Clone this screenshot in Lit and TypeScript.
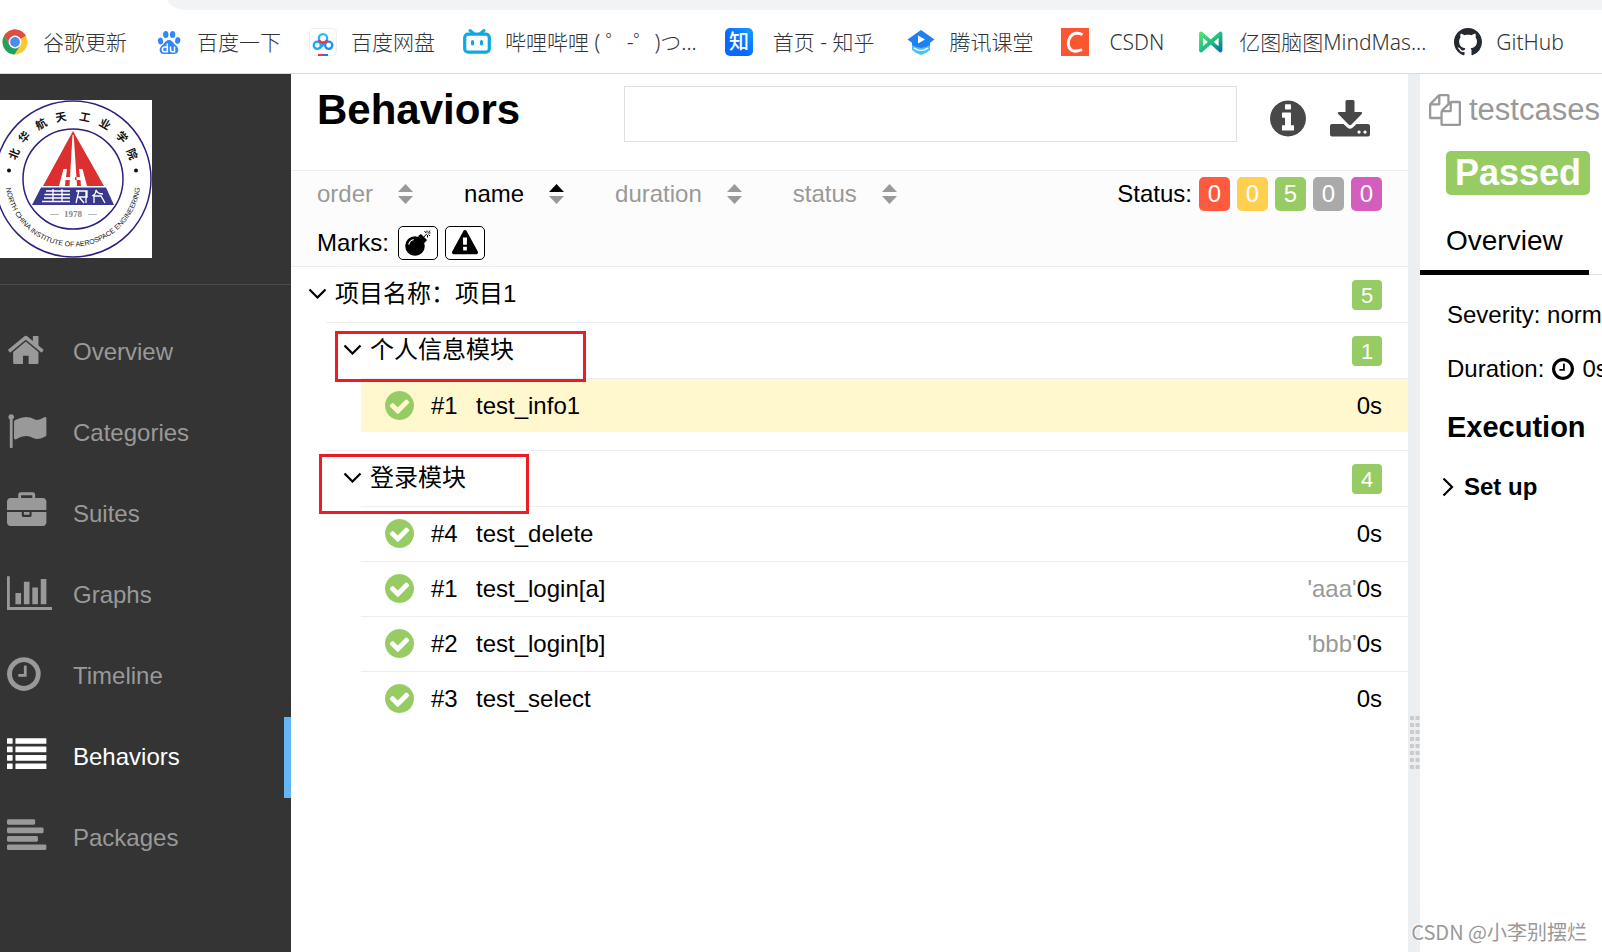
import { LitElement, html, svg, css, nothing } from "lit";
import { customElement, state } from "lit/decorators.js";
import { classMap } from "lit/directives/class-map.js";

const DISC =
  "M1664 896q0 209-103 385.5t-279.5 279.5-385.5 103-385.5-103-279.5-279.5-103-385.5 103-385.5 279.5-279.5 385.5-103 385.5 103 279.5 279.5 103 385.5z";

const clockPath =
  "M1024 544v448q0 14-9 23t-23 9h-320q-14 0-23-9t-9-23v-64q0-14 9-23t23-9h224v-352q0-14 9-23t23-9h64q14 0 23 9t9 23zm416 352q0-148-73-273t-198-198-273-73-273 73-198 198-73 273 73 273 198 198 273 73 273-73 198-198 73-273zM1664 896q0 209-103 385.5t-279.5 279.5-385.5 103-385.5-103-279.5-279.5-103-385.5 103-385.5 279.5-279.5 385.5-103 385.5 103 279.5 279.5 103 385.5z";

const navIcons: Record<string, unknown> = {
  Overview: svg`<path d="M1472 992v480q0 26-19 45t-45 19h-384v-384h-256v384h-384q-26 0-45-19t-19-45v-480q0-1 .5-3t.5-3l575-474 575 474q1 2 1 6zm223-69l-62 74q-8 9-21 11h-3q-13 0-21-7l-692-577-692 577q-12 8-24 7-13-2-21-11l-62-74q-8-10-7-23.500t11-21.500l719-599q32-26 76-26t76 26l244 204v-195q0-14 9-23t23-9h192q14 0 23 9t9 23v408l219 182q10 8 11 21.500t-7 23.500z" transform="translate(-40 0)"/>`,
  Categories: svg`<path d="M320 256q0 72-64 110v1266q0 13-9.500 22.500t-22.500 9.500h-64q-13 0-22.500-9.500t-9.500-22.500v-1266q-64-38-64-110 0-53 37.500-90.500t90.500-37.500 90.500 37.500 37.500 90.500zm1472 64v763q0 25-12.500 38.500t-39.500 27.500q-215 116-369 116-61 0-123.500-22t-108.500-48-115.500-48-142.500-22q-192 0-464 146-17 9-33 9-26 0-45-19t-19-45v-742q0-32 31-55 21-14 79-43 236-120 421-120 107 0 200 29t219 88q38 19 88 19 54 0 117.500-21t110-47 88-47 54.500-21q26 0 45 19t19 45z"/>`,
  Suites: svg`<path d="M640 256h512v-128h-512v128zm1152 640v480q0 66-47 113t-113 47h-1472q-66 0-113-47t-47-113v-480h672v160q0 26 19 45t45 19h320q26 0 45-19t19-45v-160h672zm-768 0v128h-256v-128h256zm768-480v384h-1792v-384q0-66 47-113t113-47h352v-160q0-40 28-68t68-28h576q40 0 68 28t28 68v160h352q66 0 113 47t47 113z"/>`,
  Graphs: svg`<path d="M640 896v512h-256v-512h256zm384-512v1024h-256v-1024h256zm1024 1152v128h-2048v-1536h128v1408h1920zm-640-896v768h-256v-768h256zm384-384v1152h-256v-1152h256z"/>`,
  Timeline: svg`<path transform="translate(-128 0)" fill-rule="evenodd" d=${clockPath} />`,
  Behaviors: svg`${[128, 512, 896, 1280].map(
    (y) => svg`<rect x="0" y=${y} width="256" height="256" rx="24"/><rect x="384" y=${y} width="1408" height="256" rx="24"/>`
  )}`,
  Packages: svg`${[
    [128, 1280],
    [512, 1664],
    [896, 1408],
    [1280, 1792],
  ].map(([y, w]) => svg`<rect x="0" y=${y} width=${w} height="256" rx="64"/>`)}`,
};

interface Bookmark {
  label: string;
  icon: unknown;
  wide?: boolean;
}

const bookmarks: Bookmark[] = [
  {
    label: "谷歌更新",
    icon: svg`<circle cx="14" cy="14" r="12.500" fill="#fbc934"/>
      <path d="M14 14 3.200 7.700A12.500 12.500 0 0 1 24.800 7.700z" fill="#dd4f43"/>
      <path d="M14 7.500h10.700A12.500 12.500 0 0 0 3.200 7.700L8.400 17z" fill="#dd4f43"/>
      <path d="M3.200 7.700A12.500 12.500 0 0 0 13.500 26.500L19 17.500 14 14 8.500 17z" fill="#1fa15d"/>
      <circle cx="14" cy="14" r="6.400" fill="#fff"/><circle cx="14" cy="14" r="4.900" fill="#4c8bf5"/>`,
  },
  {
    label: "百度一下",
    icon: svg`<g fill="#3388f8"><ellipse cx="5.500" cy="13" rx="2.600" ry="3.400" transform="rotate(-10 5.500 13)"/>
      <ellipse cx="10.800" cy="6.500" rx="2.700" ry="3.600"/><ellipse cx="17.600" cy="6.500" rx="2.700" ry="3.600"/>
      <ellipse cx="22.700" cy="12.500" rx="2.600" ry="3.400" transform="rotate(10 22.700 12.500)"/>
      <path d="M14 12c3 0 4 2.500 6 4.500 2.500 2.200 4 4 3 7-1 3-4 2.600-9 2.600s-8 .4-9-2.600c-1-3 .5-4.800 3-7 2-2 3-4.500 6-4.500z"/></g>
      <path d="M12.300 15.500v8.300H9.800a2.300 2.300 0 0 1 0-4.800h2.500M15.500 18.500v3.800q0 1.500 1.500 1.500h2.500v-5.300" fill="none" stroke="#fff" stroke-width="1.500"/>`,
  },
  {
    label: "百度网盘",
    icon: svg`<rect x=".5" y=".5" width="27" height="27" rx="4" fill="#fff" stroke="#eee"/>
      <g fill="none" stroke-width="2.300"><circle cx="8.300" cy="17.300" r="3.600" stroke="#18a8f8"/><circle cx="19.700" cy="17.300" r="3.600" stroke="#1890f8"/>
      <path d="M11 20 17 14.200" stroke="#18a8f8"/><circle cx="14" cy="10.300" r="4.200" stroke="#20b8ff"/>
      <path d="M10 12a4.200 4.200 0 0 0 8 0" stroke="#f0304c"/></g>
      <path d="M9 26h5v2H9z" fill="#f0304c"/><path d="M14 26h5v2h-5z" fill="#1878f8"/>`,
  },
  {
    label: "哔哩哔哩 ( ゜-゜)つ...",
    icon: svg`<g fill="none" stroke="#10a8e0" stroke-linecap="round"><rect x="1.700" y="6.200" width="24.600" height="18" rx="3.500" stroke-width="3.200"/>
      <path d="m7 2.500 3.500 3M21 2.500 17.500 5.500" stroke-width="3"/><path d="M9.500 13.500v2.500M18.500 13.500v2.500" stroke-width="3"/></g>`,
  },
  {
    label: "首页 - 知乎",
    wide: true,
    icon: svg`<defs><linearGradient id="zh" x1="0" y1="1" x2="1" y2="0"><stop offset=".4" stop-color="#0868ff"/><stop offset="1" stop-color="#10a0ff"/></linearGradient></defs>
      <rect width="28" height="28" rx="5" fill="url(#zh)"/><text class="zhihu" x="14" y="21" text-anchor="middle">知</text>`,
  },
  {
    label: "腾讯课堂",
    icon: svg`<path d="m14 2 13.500 9.500L23 14.800V20l-9 4-9-4v-5.200L.5 11.500z" fill="#2080f0"/>
      <path d="M5 17q9 6 18 0v5q-4 4-9 5-5-1-9-5z" fill="#50c0f8"/><path d="M7 20q7 5 14 0" fill="none" stroke="#fff" stroke-width="1.200"/>
      <path d="M11 7.500v8l7-4z" fill="#fff"/>`,
  },
  {
    label: "CSDN",
    wide: true,
    icon: svg`<path d="M0 0h28v28H0z" fill="#fc5531"/><path d="M21.500 6.800C17 4 12 5 9.300 8.800 6 14 6.500 20 11 22.300c3 1.300 6.500 1 10-.8" fill="none" stroke="#fff" stroke-width="3"/>`,
  },
  {
    label: "亿图脑图MindMas...",
    icon: svg`<defs><linearGradient id="mm" x1="0" y1="0" x2="1" y2="1"><stop offset="0" stop-color="#50e070"/><stop offset=".5" stop-color="#20c080"/><stop offset="1" stop-color="#0878a0"/></linearGradient></defs>
      <path d="M4 22.500V5.500L23.500 22.500V5.500z" fill="none" stroke="url(#mm)" stroke-width="3.800" stroke-linejoin="round"/>`,
  },
  {
    label: "GitHub",
    icon: svg`<path transform="scale(1.750)" fill="#24292f" d="M8 0C3.580 0 0 3.580 0 8c0 3.540 2.290 6.530 5.470 7.590.4.070.55-.17.55-.38 0-.19-.01-.82-.01-1.490-2.010.37-2.530-.49-2.690-.94-.09-.23-.48-.94-.82-1.130-.28-.15-.68-.52-.01-.53.63-.01 1.080.58 1.230.82.72 1.210 1.870.87 2.330.66.07-.52.28-.87.51-1.070-1.780-.2-3.640-.89-3.640-3.950 0-.87.31-1.590.82-2.150-.08-.2-.36-1.020.08-2.120 0 0 .67-.21 2.200.82.64-.18 1.320-.27 2-.27s1.360.09 2 .27c1.530-1.040 2.200-.82 2.200-.82.44 1.100.16 1.920.08 2.120.51.56.82 1.270.82 2.150 0 3.070-1.870 3.750-3.650 3.950.29.25.54.73.54 1.480 0 1.070-.01 1.930-.01 2.200 0 .21.15.46.55.38A8.010 8.010 0 0 0 16 8c0-4.420-3.580-8-8-8z"/>`,
  },
];

interface Leaf {
  order: number;
  name: string;
  param?: string;
}

interface Group {
  title: string;
  mark: string;
  leaves: Leaf[];
}

const groups: Group[] = [
  { title: "个人信息模块", mark: "mark-info", leaves: [{ order: 1, name: "test_info1" }] },
  {
    title: "登录模块",
    mark: "mark-login",
    leaves: [
      { order: 4, name: "test_delete" },
      { order: 1, name: "test_login[a]", param: "'aaa'" },
      { order: 2, name: "test_login[b]", param: "'bbb'" },
      { order: 3, name: "test_select" },
    ],
  },
];

const statuses: [string, number][] = [
  ["failed", 0],
  ["broken", 0],
  ["passed", 5],
  ["skipped", 0],
  ["unknown", 0],
];

const crest: [string, number, number, number][] = [
  ["北", 14, 54, -68],
  ["华", 24, 37, -49],
  ["航", 41, 24, -30],
  ["天", 61, 17, -11],
  ["工", 85, 17, 11],
  ["业", 105, 24, 30],
  ["学", 122, 37, 49],
  ["院", 132, 54, 68],
];

const chevronDown = html`<svg class="chevron" viewBox="0 0 19 11" aria-hidden="true">
  <path d="m1.500 1.500 8 8 8-8" fill="none" stroke="currentColor" stroke-width="2.200" />
</svg>`;

@customElement("app-root")
export class AppRoot extends LitElement {
  @state() private sortKey = "name";
  @state() private page = "Behaviors";
  @state() private selected = "test_info1";

  static styles = css`
    :host {
      display: flex;
      flex-direction: column;
      position: relative;
      min-height: 100vh;
      overflow: hidden;
      background: #fff;
      color: #000;
      font: 24px/32px "Liberation Sans", "Noto Sans CJK SC", Arial, sans-serif;
    }
    * { box-sizing: border-box; }
    button {
      font: inherit;
      color: inherit;
      background: none;
      border: 0;
      padding: 0;
      margin: 0;
      cursor: pointer;
    }
    a { color: inherit; text-decoration: none; }
    svg { display: block; flex: none; }
    ul { list-style: none; margin: 0; padding: 0; }
    h1, h2, h3, p { margin: 0; }

    .strip {
      height: 10px;
      margin-left: 168px;
      background: #f1f3f4;
      border-bottom-left-radius: 20px 10px;
    }
    .bookmarks {
      display: flex;
      gap: 28px;
      height: 64px;
      padding-left: 1px;
      align-items: center;
      border-bottom: 1px solid #d8dadc;
      color: #303438;
      font: 300 21px/28px "Noto Sans", "Noto Sans CJK SC", sans-serif;
      white-space: pre;
    }
    .bookmark { display: flex; gap: 14px; align-items: center; flex: none; }
    .bookmark.wide { gap: 20px; padding-right: 5px; }
    .bookmark svg { width: 28px; height: 28px; }
    .zhihu { font: 500 20px "Noto Sans CJK SC", sans-serif; fill: #fff; }

    .layout {
      flex: 1;
      display: grid;
      grid-template-columns: 291px minmax(0, 1fr) 12px 182px;
    }

    .sidebar { background: #343434; color: #999; }
    .brand { padding: 26px 0; border-bottom: 1px solid #4c4c4c; }
    .brand svg { width: 152px; height: 158px; background: #fff; }
    .crest-char { font: 700 11px "Noto Sans CJK SC", sans-serif; }
    .crest-ring { font: 7px "Liberation Sans", sans-serif; }
    .crest-year { font: 700 9px "Liberation Serif", serif; fill: #888; }
    .nav { padding-top: 27px; }
    .nav a {
      display: flex;
      align-items: center;
      gap: 21px;
      height: 81px;
      padding: 0 0 2px 7px;
      border-right: 7px solid transparent;
    }
    .nav a.active { color: #fff; border-right-color: #64b5f6; }
    .nav svg { width: 45px; height: 40px; margin-bottom: 4px; fill: currentColor; }

    .header {
      display: flex;
      align-items: flex-start;
      height: 97px;
      padding: 12px 38px 0 26px;
      border-bottom: 1px solid #eceff1;
    }
    .header h1 { font-size: 42px; line-height: 48px; flex: 0 0 307px; }
    .search {
      flex: 1;
      min-width: 0;
      height: 56px;
      padding: 0 14px;
      font: inherit;
      border: 1px solid #e0e0e0;
      outline: none;
      background: #fff;
    }
    .tools { display: flex; gap: 24px; padding: 14px 0 0 33px; color: #484848; }
    .tools svg { height: 37px; fill: currentColor; }

    .filters {
      display: flex;
      flex-direction: column;
      gap: 15px;
      padding: 6px 26px;
      background: #fcfcfc;
      border-bottom: 1px solid #eceff1;
    }
    .filter-row { display: flex; align-items: center; height: 34px; }
    .sorts { display: flex; gap: 51px; flex: 1; }
    .sort { display: flex; align-items: center; gap: 25px; color: #999; }
    .sort.active { color: #000; }
    .sort svg { width: 15px; height: 20px; }
    .statuses, .marks { display: flex; align-items: center; gap: 7px; }
    .marks span { padding-right: 2px; }
    .status {
      width: 31px;
      height: 34px;
      border-radius: 5px;
      color: #fff;
      text-align: center;
    }
    .failed { background: #fd5a3e; }
    .broken { background: #ffd050; }
    .passed { background: #97cc64; }
    .skipped { background: #aaa; }
    .unknown { background: #d35ebe; }
    .mark {
      display: grid;
      place-items: center;
      width: 40px;
      height: 34px;
      border: 1px solid #000;
      border-radius: 5px;
      background: #fff;
    }
    .mark svg { width: 26px; height: 26px; }

    .node {
      display: flex;
      align-items: center;
      gap: 8px;
      width: 100%;
      height: 55px;
      padding: 0 26px 0 17px;
      text-align: left;
    }
    .node .title { flex: 1; padding-bottom: 2px; }
    .chevron { width: 19px; height: 11px; margin-bottom: 2px; }
    .count {
      width: 30px;
      height: 30px;
      border-radius: 4px;
      background: #97cc64;
      color: #fff;
      font-size: 22px;
      line-height: 31px;
      text-align: center;
    }
    .children { margin-left: 35px; }
    .children .children { padding-bottom: 18px; }
    .children > li { position: relative; border-top: 1px solid #eceff1; }
    .children .children > li:not(:last-child) { padding-bottom: 1px; }
    .leaf {
      display: flex;
      align-items: center;
      height: 53px;
      padding: 0 26px 0 24px;
    }
    .leaf.selected { background: #fff8cf; }
    .leaf svg { width: 29px; height: 29px; margin-right: 17px; fill: #97cc64; }
    .leaf .order { width: 45px; }
    .leaf .name { flex: 1; }
    .leaf .param { color: #999; }
    .callout { position: absolute; z-index: 1; border: 3px solid #ed1c24; pointer-events: none; }
    .mark-info { left: 9px; top: 8px; width: 251px; height: 51px; }
    .mark-login { left: -7px; top: 3px; width: 210px; height: 60px; }

    .gutter { background: #eceff1; padding: 642px 0 0 2px; }
    .gutter svg { width: 10px; height: 54px; fill: #ccc; }

    .detail { overflow: hidden; white-space: nowrap; }
    .path {
      display: flex;
      align-items: center;
      gap: 8px;
      height: 72px;
      padding-left: 9px;
      color: #999;
      font-size: 31px;
    }
    .path svg { width: 32px; height: 32px; fill: currentColor; }
    .verdict {
      display: block;
      width: 144px;
      margin: 5px 0 0 26px;
      border-radius: 5px;
      color: #fff;
      font-size: 36px;
      font-weight: 700;
      line-height: 44px;
      text-align: center;
    }
    .tabs { display: flex; margin-top: 22px; border-bottom: 1px solid #e0e0e0; }
    .tab {
      margin-bottom: -1px;
      padding: 8px 26px 13px;
      border-bottom: 5px solid #000;
      font-size: 28px;
    }
    .facts { padding: 24px 0 0 27px; }
    .fact { display: flex; gap: 8px; align-items: center; margin-bottom: 22px; }
    .fact svg { width: 22px; height: 22px; }
    .facts h2 { font-size: 29px; padding-top: 4px; margin-bottom: 28px; }
    .setup { display: flex; align-items: center; gap: 10px; margin-left: 22px; font-weight: 700; }
    .setup svg { width: 12px; height: 20px; }

    .watermark {
      position: absolute;
      right: 15px;
      bottom: 6px;
      color: #999;
      font: 20px/28px "Noto Sans CJK SC", sans-serif;
      text-shadow: 1px 1px 0 #fff, -1px -1px 0 #fff;
    }
  `;

  private renderBookmark(b: Bookmark) {
    return html`<a class=${classMap({ bookmark: true, wide: !!b.wide })} href="#">
      <svg viewBox="0 0 28 28" aria-hidden="true">${b.icon}</svg><span>${b.label}</span></a>`;
  }

  private renderCrest() {
    return html`<svg viewBox="0 0 152 158" role="img" aria-label="North China Institute of Aerospace Engineering">
      <defs><path id="ring" d="M5.500 79a67.500 67.500 0 0 0 135 0" /></defs>
      <circle cx="73" cy="79" r="78" fill="#fff" stroke="#2f2080" stroke-width="1.500" />
      <circle cx="73" cy="79" r="50" fill="none" stroke="#2f2080" stroke-width="1.500" />
      <path d="M73 31 104 86H43z" fill="#dc3030" />
      <path d="M72.500 35h1.200L77 86h-7.500zM59 86l4.500-17h3.500l-1 8h5v3h-5.500l-.5 6zM87 86l-4.500-17H79l1 8h-5v3h5.500l.5 6z" fill="#fff" />
      <path d="M41 87.500h65l8 17.500H32z" fill="#38388c" />
      <path d="M46 91h24M44.500 94.500H70M44 98h26M42 101.500h28M53 89v13M62 89v13M79 90l-3 13M76 91h11v6H77M86 91v12M79 97l5 6M92 96c3-1 4-4 4-6 1 3 4 4 7 4M94 96v7M94 96h7l4 7" fill="none" stroke="#fff" stroke-width="1.300" />
      <g fill="#111">
        <circle cx="9" cy="70.500" r="2" /><circle cx="136" cy="70.500" r="2" />
        ${crest.map(
          ([ch, x, y, r]) => svg`<text class="crest-char" text-anchor="middle" transform="translate(${x} ${y}) rotate(${r})" y="4">${ch}</text>`
        )}
        <text class="crest-ring"><textPath href="#ring" startOffset="50%" text-anchor="middle">NORTH CHINA INSTITUTE OF AEROSPACE ENGINEERING</textPath></text>
      </g>
      <text class="crest-year" x="73" y="117" text-anchor="middle">1978</text>
      <path d="M50 114.500h9M88 114.500h9" stroke="#bbb" />
    </svg>`;
  }

  private renderSort(key: string) {
    const active = this.sortKey === key;
    return html`<button class=${classMap({ sort: true, active })} @click=${() => (this.sortKey = key)}>
      ${key}
      <svg viewBox="0 0 15 20" aria-hidden="true">
        <path d="M7.500 0 15 8H0z" fill="currentColor" /><path d="M0 12h15l-7.500 8z" fill="#999" />
      </svg>
    </button>`;
  }

  private renderLeaf(leaf: Leaf) {
    return html`<li>
      <a class=${classMap({ leaf: true, selected: leaf.name === this.selected })} href="#" @click=${() => (this.selected = leaf.name)}>
        <svg viewBox="128 128 1536 1536" aria-hidden="true">
          <path d="M1412 734q0-28-18-46l-91-90q-19-19-45-19t-45 19l-408 407-226-226q-19-19-45-19t-45 19l-91 90q-18 18-18 46 0 27 18 45l362 362q19 19 45 19 27 0 46-19l543-543q18-18 18-45z${DISC}" fill-rule="evenodd" />
        </svg>
        <span class="order">#${leaf.order}</span>
        <span class="name">${leaf.name}</span>
        ${leaf.param ? html`<span class="param">${leaf.param}</span>` : nothing}
        <span>0s</span>
      </a>
    </li>`;
  }

  private renderGroup(group: Group) {
    return html`<li>
      <button class="node">
        ${chevronDown}<span class="title">${group.title}</span><span class="count">${group.leaves.length}</span>
      </button>
      <ul class="children">${group.leaves.map((l) => this.renderLeaf(l))}</ul>
      <div class="callout ${group.mark}"></div>
    </li>`;
  }

  render() {
    return html`
      <div class="strip"></div>
      <nav class="bookmarks" aria-label="Bookmarks">${bookmarks.map((b) => this.renderBookmark(b))}</nav>
      <div class="layout">
        <aside class="sidebar">
          <div class="brand">${this.renderCrest()}</div>
          <nav class="nav">
            ${Object.keys(navIcons).map(
              (name) => html`<a href="#" class=${classMap({ active: name === this.page })} @click=${() => (this.page = name)}>
                <svg viewBox="0 0 2048 1792" aria-hidden="true">${navIcons[name]}</svg>${name}</a>`
            )}
          </nav>
        </aside>

        <main>
          <header class="header">
            <h1>Behaviors</h1>
            <input class="search" type="text" aria-label="Search" />
            <div class="tools">
              <button aria-label="Show info">
                <svg width="36" viewBox="128 128 1536 1536">
                  <path fill-rule="evenodd" d="M1152 1376v-160q0-14-9-23t-23-9h-96v-512q0-14-9-23t-23-9h-320q-14 0-23 9t-9 23v160q0 14 9 23t23 9h96v320h-96q-14 0-23 9t-9 23v160q0 14 9 23t23 9h448q14 0 23-9t9-23zm-128-896v-160q0-14-9-23t-23-9h-192q-14 0-23 9t-9 23v160q0 14 9 23t23 9h192q14 0 23-9t9-23z${DISC}" />
                </svg>
              </button>
              <button aria-label="Download CSV">
                <svg width="40" viewBox="0 0 40 37">
                  <path d="M17 0h6q1.500 0 1.500 1.500V12H31q2 .5.500 2.300l-10 10.200q-1.500 1.300-3 0l-10-10.200Q7 12.500 9 12h6.500V1.500Q15.500 0 17 0z" />
                  <path fill-rule="evenodd" d="M2 24h11.500l4.300 4q2.200 1.600 4.400 0l4.300-4H38q2 0 2 2v8.500q0 2-2 2H2q-2 0-2-2V26q0-2 2-2zm27 6.500a1.600 1.600 0 1 0 .1 0zm6 0a1.600 1.600 0 1 0 .1 0z" />
                </svg>
              </button>
            </div>
          </header>

          <section class="filters">
            <div class="filter-row">
              <div class="sorts">${["order", "name", "duration", "status"].map((k) => this.renderSort(k))}</div>
              <div class="statuses">
                <span>Status:</span>
                ${statuses.map(([cls, n]) => html`<button class="status ${cls}" aria-label=${cls}>${n}</button>`)}
              </div>
            </div>
            <div class="filter-row marks">
              <span>Marks:</span>
              <button class="mark" aria-label="Flaky">
                <svg viewBox="0 0 26 26">
                  <circle cx="10" cy="16" r="9.800" /><path d="m13 6 3-2 6 6-2.500 3z" />
                  <path d="M3.700 14.500q1-4 5-5" fill="none" stroke="#fff" stroke-width="1.200" />
                  <path d="m18 8 4-4.500M22 .5v2M19.500 1l1.500 2M25.500 3h-2M25 6l-1.500-1.500M22.500 5v2.500M25 .5l-1.500 2" fill="none" stroke="#000" />
                </svg>
              </button>
              <button class="mark" aria-label="New failed">
                <svg viewBox="0 0 1792 1792">
                  <path d="M1024 1375v-190q0-14-9.500-23.500t-22.500-9.500h-192q-13 0-22.500 9.500t-9.500 23.500v190q0 14 9.500 23.500t22.500 9.500h192q13 0 22.500-9.500t9.500-23.500zm-2-374l18-459q0-12-10-19-13-11-24-11h-220q-11 0-24 11-10 7-10 21l17 457q0 10 10 16.500t24 6.500h185q14 0 23.500-6.500t10.500-16.500zm-14-934l768 1408q35 63-2 126-17 29-46.500 46t-63.500 17h-1536q-34 0-63.500-17t-46.500-46q-37-63-2-126l768-1408q17-31 47-49t65-18 65 18 47 49z" />
                </svg>
              </button>
            </div>
          </section>

          <section>
            <button class="node">${chevronDown}<span class="title">项目名称：项目1</span><span class="count">5</span></button>
            <ul class="children">${groups.map((g) => this.renderGroup(g))}</ul>
          </section>
        </main>

        <div class="gutter">
          <svg viewBox="0 0 10 54" aria-hidden="true">
            ${[0, 7, 14, 21, 28, 35, 42, 49].map(
              (y) => svg`<rect x="0" y=${y} width="4" height="4"/><rect x="5.500" y=${y} width="4" height="4"/>`
            )}
          </svg>
        </div>

        <section class="detail">
          <div class="path">
            <svg viewBox="0 0 1792 1792" aria-hidden="true">
              <path d="M1696 384q40 0 68 28t28 68v1216q0 40-28 68t-68 28h-960q-40 0-68-28t-28-68v-288h-544q-40 0-68-28t-28-68v-672q0-40 20-88t48-76l408-408q28-28 76-48t88-20h416q40 0 68 28t28 68v328q68-40 128-40h416zm-544 213l-299 299h299v-299zm-640-384l-299 299h299v-299zm196 647l316-316v-416h-384v416q0 40-28 68t-68 28h-416v640h512v-256q0-40 20-88t48-76zm956 804v-1152h-384v416q0 40-28 68t-68 28h-416v640h896z" />
            </svg>
            <span>testcases</span>
          </div>
          <span class="verdict passed">Passed</span>
          <div class="tabs"><button class="tab">Overview</button></div>
          <div class="facts">
            <p class="fact">Severity: normal</p>
            <p class="fact">
              <span>Duration:</span>
              <svg viewBox="128 128 1536 1536" aria-hidden="true"><path fill-rule="evenodd" d=${clockPath} /></svg>
              <span>0s</span>
            </p>
            <h2>Execution</h2>
          </div>
          <button class="setup">
            <svg viewBox="0 0 12 20" aria-hidden="true"><path d="m1.500 1.500 8.500 8.500-8.500 8.500" fill="none" stroke="#000" stroke-width="2.200" /></svg>
            Set up
          </button>
        </section>
      </div>
      <div class="watermark">CSDN @小李别摆烂</div>
    `;
  }
}
